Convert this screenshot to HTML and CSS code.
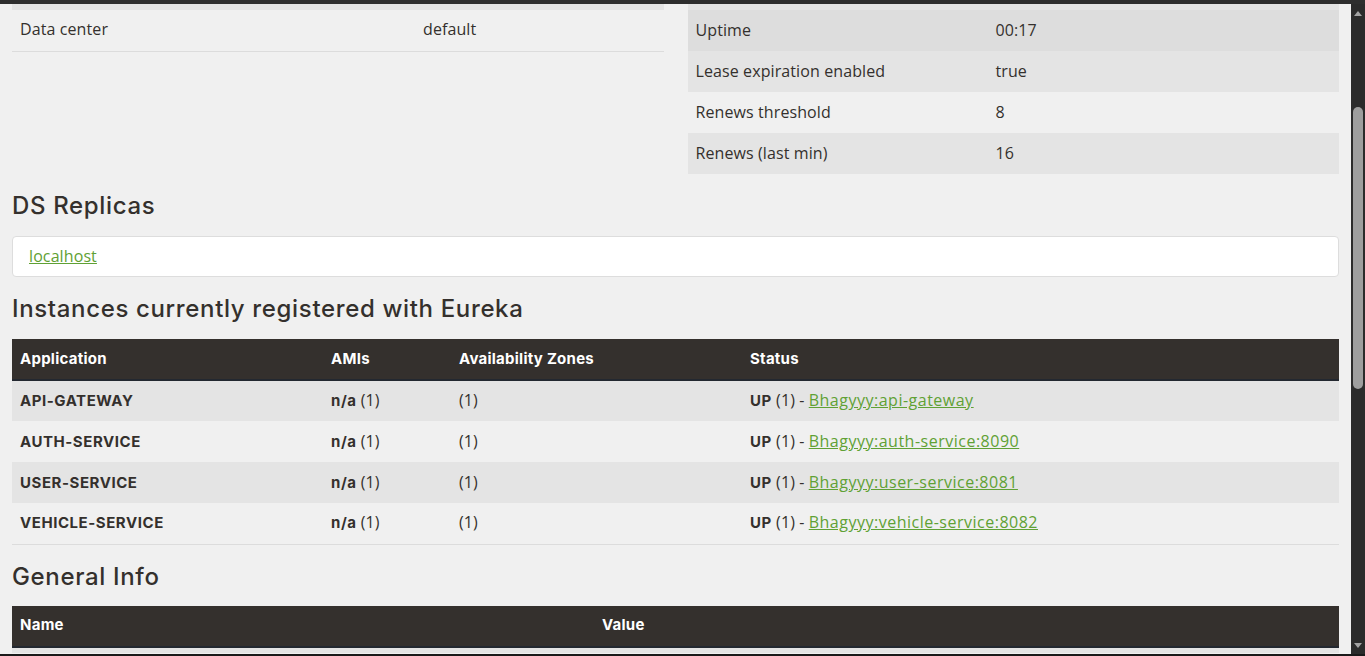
FILE: index.html
```html
<!DOCTYPE html>
<html lang="en">
<head>
<meta charset="utf-8">
<title>Eureka</title>
<link rel="stylesheet" href="styles.css">
</head>
<body>
<div class="frame-top"></div>
<div class="window">
  <div class="viewport">
    <div class="page">
      <div class="status-grid">
        <table class="table kv kv-left">
          <colgroup><col class="c-left"><col></colgroup>
          <tbody>
            <tr class="odd stub"><td></td><td></td></tr>
            <tr class="last"><td>Data center</td><td>default</td></tr>
          </tbody>
        </table>
        <table class="table kv kv-right">
          <colgroup><col class="c-right"><col></colgroup>
          <tbody>
            <tr class="odd stub"><td></td><td></td></tr>
            <tr class="hover"><td>Uptime</td><td>00:17</td></tr>
            <tr class="odd"><td>Lease expiration enabled</td><td>true</td></tr>
            <tr><td>Renews threshold</td><td>8</td></tr>
            <tr class="odd"><td>Renews (last min)</td><td>16</td></tr>
          </tbody>
        </table>
      </div>

      <h1 class="heading h-replicas">DS Replicas</h1>
      <ul class="list-group">
        <li class="list-group-item"><a href="#">localhost</a></li>
      </ul>

      <h1 class="heading h-instances">Instances currently registered with Eureka</h1>
      <table class="table instances">
        <colgroup><col class="c-app"><col class="c-ami"><col class="c-zone"><col></colgroup>
        <thead>
          <tr><th>Application</th><th>AMIs</th><th>Availability Zones</th><th>Status</th></tr>
        </thead>
        <tbody>
          <tr class="odd"><td><b>API-GATEWAY</b></td><td><b>n/a</b> (1)</td><td>(1)</td><td><b>UP</b> (1) - <a href="#">Bhagyyy:api-gateway</a></td></tr>
          <tr><td><b>AUTH-SERVICE</b></td><td><b>n/a</b> (1)</td><td>(1)</td><td><b>UP</b> (1) - <a href="#">Bhagyyy:auth-service:8090</a></td></tr>
          <tr class="odd"><td><b>USER-SERVICE</b></td><td><b>n/a</b> (1)</td><td>(1)</td><td><b>UP</b> (1) - <a href="#">Bhagyyy:user-service:8081</a></td></tr>
          <tr class="last"><td><b>VEHICLE-SERVICE</b></td><td><b>n/a</b> (1)</td><td>(1)</td><td><b>UP</b> (1) - <a href="#">Bhagyyy:vehicle-service:8082</a></td></tr>
        </tbody>
      </table>

      <h1 class="heading h-general">General Info</h1>
      <table class="table general">
        <colgroup><col class="c-name"><col></colgroup>
        <thead>
          <tr><th>Name</th><th>Value</th></tr>
        </thead>
        <tbody>
          <tr class="odd stub"><td></td><td></td></tr>
        </tbody>
      </table>
    </div>
  </div>
  <div class="scrollbar">
    <div class="arrow arrow-up"></div>
    <div class="track"><div class="thumb"></div></div>
    <div class="arrow arrow-down"></div>
  </div>
</div>
<div class="frame-bottom"></div>
</body>
</html>
```
FILE: styles.css
```css
html, body {
  margin: 0;
  padding: 0;
  height: 656px;
  overflow: hidden;
}
body {
  display: flex;
  flex-direction: column;
  background: #2b2b2b;
  font-family: "Open Sans", "Noto Sans", sans-serif;
  font-size: 16px;
  letter-spacing: 0.1px;
  color: #34302d;
}
.frame-top { height: 4px; background: #2e2e2e; flex: none; }
.frame-bottom { height: 2px; background: #1a1a1a; flex: none; }
.window {
  flex: 1;
  display: flex;
  min-height: 0;
}
.viewport {
  flex: 1;
  overflow: hidden;
  background: #f0f0f0;
}
.page {
  padding: 0 12px;
}

/* scrollbar */
.scrollbar {
  width: 14px;
  flex: none;
  background: #2b2b2b;
  display: flex;
  flex-direction: column;
  align-items: center;
}
.arrow { width: 0; height: 0; border-left: 4px solid transparent; border-right: 4px solid transparent; flex: none; }
.arrow-up { border-bottom: 5px solid #a3a3a3; margin-top: 7px; }
.arrow-down { border-top: 5px solid #a3a3a3; margin-bottom: 6px; }
.track { flex: 1; width: 100%; display: flex; justify-content: center; padding-top: 91px; }
.thumb { width: 10px; height: 282px; background: #9e9e9e; border-radius: 5px; }

/* tables */
.table {
  width: 100%;
  border-collapse: collapse;
  border-spacing: 0;
}
.table td, .table th {
  height: 41px;
  padding: 0 8px 2px;
  text-align: left;
  vertical-align: middle;
  box-sizing: border-box;
  white-space: nowrap;
}
.table tr.stub td { height: 6px; padding: 0; }
.table tr.odd td { background: #e4e4e4; }
.table tr.hover td { background: #dddddd; }
.table tr.last td { border-bottom: 1px solid #dcdcdc; }

.status-grid {
  display: grid;
  grid-template-columns: 1fr 1fr;
  column-gap: 24px;
  align-items: start;
}
.c-left { width: 403px; }
.c-right { width: 300px; }

.table thead th {
  background: #34302d;
  color: #ffffff;
  font-family: "Inter", "Open Sans", sans-serif;
  font-weight: 700;
  font-size: 15px;
  letter-spacing: 0.25px;
  border-bottom: 2px solid #232830;
}
.c-app { width: 311px; }
.c-ami { width: 128px; }
.c-zone { width: 291px; }
.c-name { width: 582px; }

b {
  font-family: "Inter", "Open Sans", sans-serif;
  font-weight: 700;
  font-size: 15px;
  letter-spacing: 0.55px;
}

a {
  color: #5fa134;
  text-decoration: underline;
}
.table a { letter-spacing: 0.5px; }

.heading {
  font-family: "Inter", "Open Sans", sans-serif;
  font-weight: 500;
  font-size: 24px;
  line-height: 26px;
  letter-spacing: 0.65px;
  color: #34302d;
  margin: 0;
}
.h-replicas { margin-top: 19px; margin-bottom: 17px; }
.h-instances { margin-top: 19px; margin-bottom: 17px; }
.h-general { margin-top: 19px; margin-bottom: 16px; }

.list-group {
  list-style: none;
  margin: 0;
  padding: 0;
}
.list-group-item {
  background: #ffffff;
  border: 1px solid #dddddd;
  border-radius: 4px;
  height: 41px;
  box-sizing: border-box;
  display: flex;
  align-items: center;
  padding: 0 16px 1px;
}
```
